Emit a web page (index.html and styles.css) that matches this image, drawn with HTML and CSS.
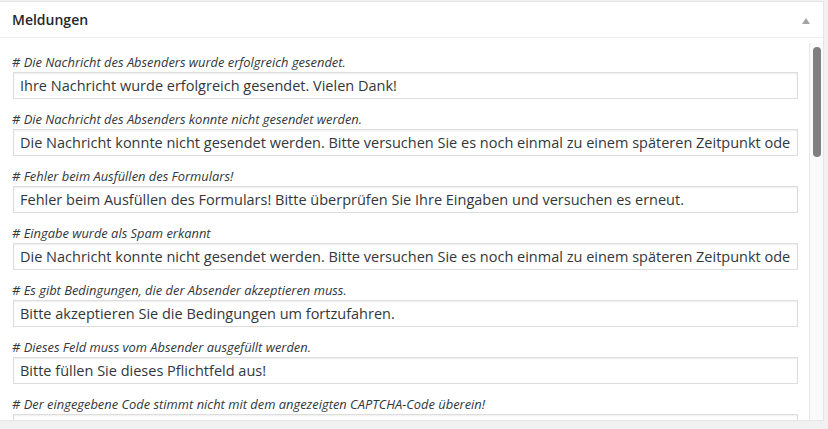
FILE: index.html
```html
<!DOCTYPE html>
<html lang="de">
<head>
<meta charset="utf-8">
<title>Meldungen</title>
<link rel="stylesheet" href="styles.css">
</head>
<body>
<div class="postbox">
  <div class="hndle">
    <h2 class="title">Meldungen</h2>
    <span class="toggle"></span>
  </div>
  <div class="inside">
    <div class="fields">
      <div class="row">
        <p class="label"># Die Nachricht des Absenders wurde erfolgreich gesendet.</p>
        <input class="field" type="text" value="Ihre Nachricht wurde erfolgreich gesendet. Vielen Dank!">
      </div>
      <div class="row">
        <p class="label"># Die Nachricht des Absenders konnte nicht gesendet werden.</p>
        <input class="field" type="text" value="Die Nachricht konnte nicht gesendet werden. Bitte versuchen Sie es noch einmal zu einem späteren Zeitpunkt oder kontaktieren Sie uns.">
      </div>
      <div class="row">
        <p class="label"># Fehler beim Ausfüllen des Formulars!</p>
        <input class="field" type="text" value="Fehler beim Ausfüllen des Formulars! Bitte überprüfen Sie Ihre Eingaben und versuchen es erneut.">
      </div>
      <div class="row">
        <p class="label"># Eingabe wurde als Spam erkannt</p>
        <input class="field" type="text" value="Die Nachricht konnte nicht gesendet werden. Bitte versuchen Sie es noch einmal zu einem späteren Zeitpunkt oder kontaktieren Sie uns.">
      </div>
      <div class="row">
        <p class="label"># Es gibt Bedingungen, die der Absender akzeptieren muss.</p>
        <input class="field" type="text" value="Bitte akzeptieren Sie die Bedingungen um fortzufahren.">
      </div>
      <div class="row">
        <p class="label"># Dieses Feld muss vom Absender ausgefüllt werden.</p>
        <input class="field" type="text" value="Bitte füllen Sie dieses Pflichtfeld aus!">
      </div>
      <div class="row">
        <p class="label"># Der eingegebene Code stimmt nicht mit dem angezeigten CAPTCHA-Code überein!</p>
        <input class="field" type="text" value="Der eingegebene Code ist falsch.">
      </div>
    </div>
    <div class="track"><div class="thumb"></div></div>
  </div>
</div>
</body>
</html>
```

FILE: styles.css
```css
html, body {
  margin: 0;
  padding: 0;
  background: #f1f1f1;
  font-family: "Open Sans", "Liberation Sans", sans-serif;
  color: #32373c;
}

.postbox {
  width: 823px;
  margin-top: 1px;
  background: #fff;
  border-top: 1px solid #e5e5e5;
  border-right: 1px solid #e5e5e5;
  border-bottom: 1px solid #e5e5e5;
  box-shadow: 0 1px 1px rgba(0, 0, 0, 0.04);
}

.hndle {
  height: 35px;
  display: flex;
  align-items: center;
  justify-content: space-between;
  padding: 0 13px 0 12px;
  border-bottom: 1px solid #eee;
}

.title {
  margin: 0;
  font-size: 14px;
  font-weight: 600;
  color: #23282d;
  line-height: 1.4;
}

.toggle {
  width: 0;
  height: 0;
  border-left: 4px solid transparent;
  border-right: 4px solid transparent;
  border-bottom: 6px solid #a0a5aa;
  margin-top: 2px;
}

.inside {
  display: flex;
  height: 382px;
  overflow: hidden;
}

.fields {
  flex: 1;
  min-width: 0;
  padding: 15px 12px 0 12px;
}

.row {
  margin-bottom: 11px;
}

.label {
  margin: 0 0 1px 0;
  font-size: 12.9px;
  line-height: 18px;
  font-style: italic;
  color: #32373c;
}

.field {
  display: block;
  box-sizing: border-box;
  width: 785px;
  height: 27px;
  margin: 0 0 0 1px;
  padding: 0 6px;
  border: 1px solid #ddd;
  border-radius: 0;
  box-shadow: inset 0 1px 2px rgba(0, 0, 0, 0.07);
  background: #fff;
  font-family: "Open Sans", "Liberation Sans", sans-serif;
  font-size: 14.5px;
  color: #32373c;
  outline: none;
}

.track {
  width: 13px;
  margin-top: 5px;
  border-left: 1px solid #e8e8e8;
  background: #fafafa;
  flex-shrink: 0;
}

.thumb {
  width: 8px;
  height: 110px;
  margin: 4px 0 0 3px;
  border-radius: 4px;
  background: #7f7f7f;
}
```
